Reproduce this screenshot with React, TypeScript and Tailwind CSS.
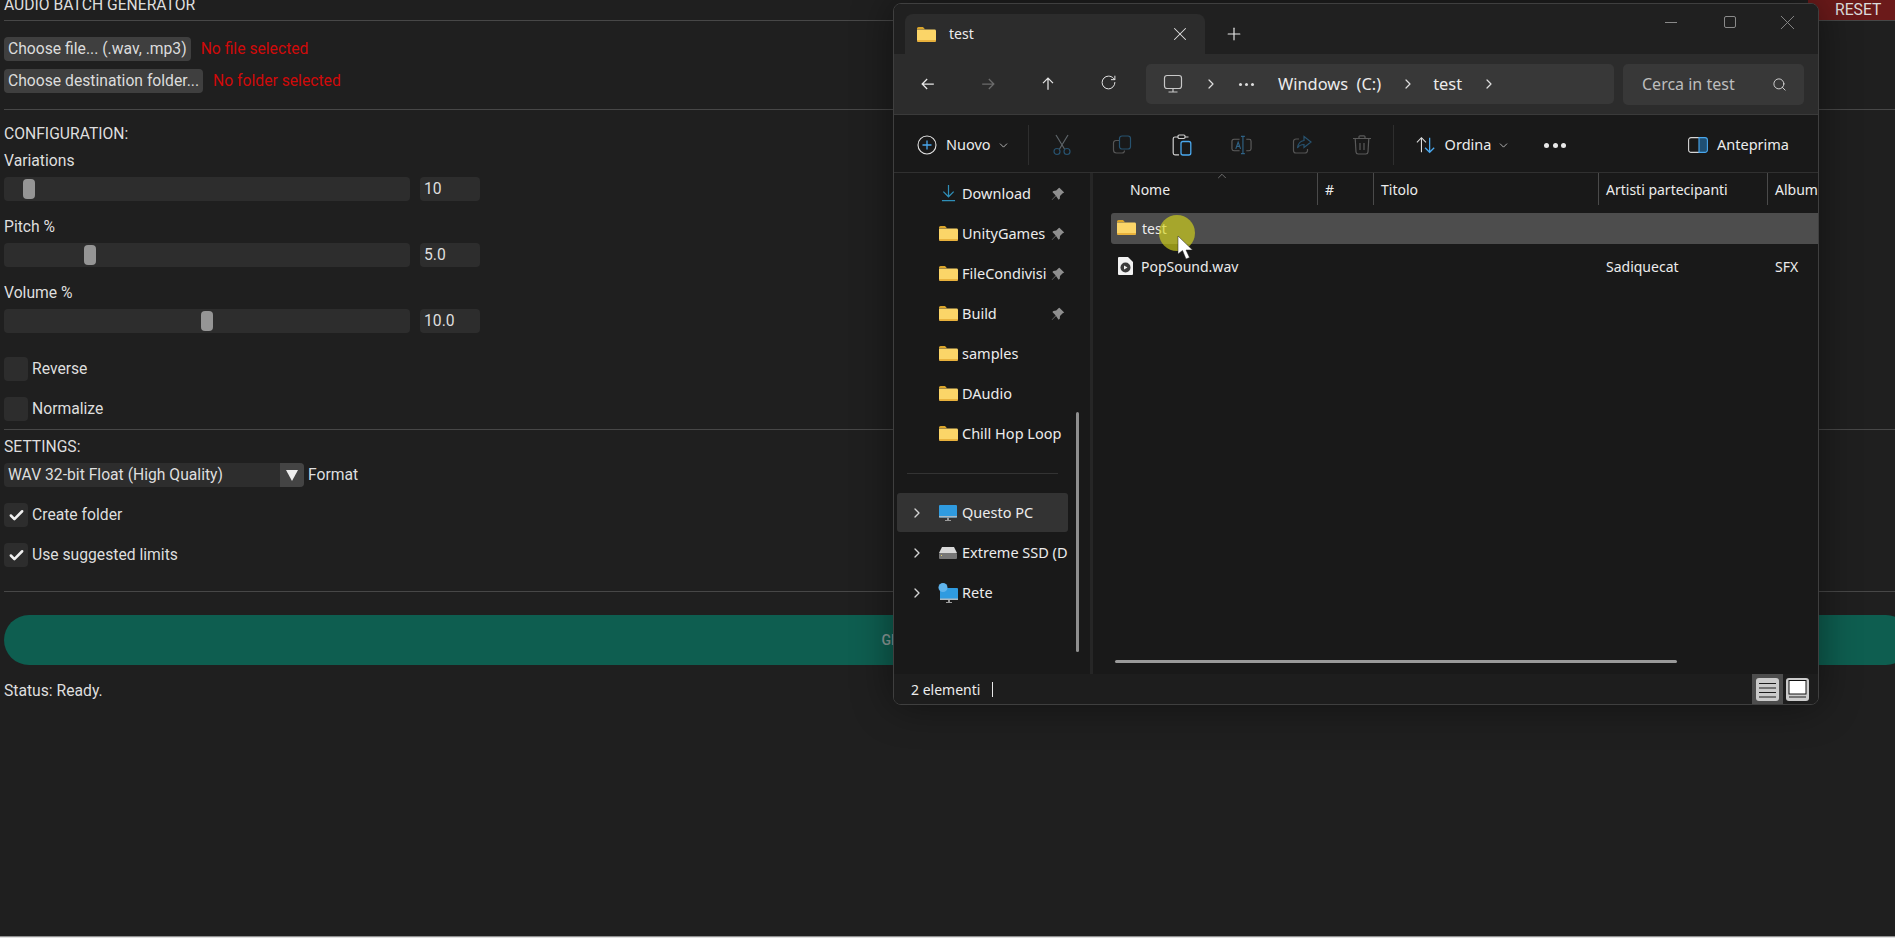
import React, { FC, ReactNode } from 'react';
import { ChevronDown, ChevronRight, ChevronUp, Check, Plus, RotateCw, Search, X } from 'lucide-react';

// ---- left app bits ----
const Hr: FC<{ className?: string }> = ({ className = '' }) => <div className={`h-px bg-[#474747] ${className}`} />;

const PickRow: FC<{ label: string; hint: string }> = ({ label, hint }) => (
  <div className="flex items-center h-6 mb-2">
    <div className="h-6 px-1 flex items-center rounded-[4px] bg-[#3f3f3f] text-[#dcdcdc]">{label}</div>
    <span className="ml-[10px] text-[#d00a0a]">{hint}</span>
  </div>
);

const SliderRow: FC<{ label: string; value: string; thumb: string }> = ({ label, value, thumb }) => (
  <div className="h-[66px]">
    <div className="h-[16px] leading-[16px]">{label}</div>
    <div className="flex mt-[8px]">
      <div className="w-[406px] h-6 rounded-[4px] bg-[#2d2d2d] flex items-center">
        <div className={`w-[12px] h-5 rounded-[4px] bg-[#959595] ${thumb}`} />
      </div>
      <div className="ml-[10px] w-[60px] h-6 rounded-[4px] bg-[#2d2d2d] px-1 flex items-center">{value}</div>
    </div>
  </div>
);

const CheckRow: FC<{ label: string; on?: boolean; className?: string }> = ({ label, on, className = '' }) => (
  <div className={`flex items-center h-6 ${className}`}>
    <div className="w-6 h-6 rounded-[4px] bg-[#2d2d2d] flex items-center justify-center">
      {on && <Check size={17} strokeWidth={3.6} color="#f0f0f0" />}
    </div>
    <span className="ml-[4px]">{label}</span>
  </div>
);

// ---- explorer icons ----
const Folder: FC<{ className?: string }> = ({ className = 'w-[19px] h-[15px]' }) => (
  <svg viewBox="0 0 19 15" className={className}>
    <path d="M0 1.5A1.5 1.5 0 0 1 1.5 0H6l2 2.2H0z" fill="#dba52a" />
    <path d="M0 2.6h17.6A1.4 1.4 0 0 1 19 4v9.6a1.4 1.4 0 0 1-1.4 1.4H1.4A1.4 1.4 0 0 1 0 13.6z" fill="#fbd568" />
    <path d="M0 13h19v.6a1.4 1.4 0 0 1-1.4 1.4H1.4A1.4 1.4 0 0 1 0 13.6z" fill="#e8b13c" />
  </svg>
);

const Pin: FC = () => (
  <svg viewBox="0 0 14 14" className="w-[14px] h-[14px]">
    <path d="M8.4.8l4.8 4.8-1.5.6-2.7 2.7-.2 2.8-1.2 1L5 8.9 1 13l-.3-.3 4-4.2L1.4 5l1-1.1 2.8-.3 2.6-2.6z" fill="#8f8f8f" />
  </svg>
);

const Sep: FC<{ className?: string }> = ({ className = '' }) => <div className={`w-px h-[40px] bg-[#2e2e2e] ${className}`} />;

const IconCell: FC<{ children: ReactNode }> = ({ children }) => (
  <div className="w-[60px] flex items-center justify-center">{children}</div>
);

const SideRow: FC<{ icon: ReactNode; label: string; pin?: boolean; expand?: boolean; active?: boolean }> = ({ icon, label, pin, expand, active }) => (
  <div className={`ml-[3px] w-[171px] h-[39px] mb-px flex items-center rounded-[3px] ${active ? 'bg-[#333333]' : ''}`}>
    <div className="w-[41px] pl-[12px] flex">
      {expand && <ChevronRight size={16} strokeWidth={2} color="#d4d4d4" />}
    </div>
    <div className="w-[20px] flex justify-center">{icon}</div>
    <div className={`ml-[4px] overflow-hidden whitespace-nowrap ${pin ? 'w-[85px]' : 'w-[106px]'}`}>{label}</div>
    {pin && <div className="ml-[4px]"><Pin /></div>}
  </div>
);

const Explorer: FC = () => (
  <div className="absolute left-[893px] top-[3px] w-[926px] h-[702px] flex flex-col overflow-hidden rounded-[8px] border border-[#3f3f3f] bg-[#191919] text-[#ececec] text-[14px] shadow-[0_0_40px_rgba(0,0,0,0.45)] font-[family-name:'Noto_Sans',sans-serif]">
    {/* tabs */}
    <div className="h-[50px] shrink-0 bg-[#202020] flex items-end pl-[11px]">
      <div className="w-[300px] h-[40px] rounded-t-[8px] bg-[#2c2c2c] flex items-center pl-[12px]">
        <Folder />
        <span className="ml-[13px] -mt-[1px]">test</span>
        <X size={22} strokeWidth={1.1} color="#e0e0e0" className="ml-[195px]" />
      </div>
      <div className="h-[40px] flex items-center ml-[19px]">
        <Plus size={20} strokeWidth={1.4} color="#e8e8e8" />
      </div>
      <div className="ml-auto self-start flex items-center h-[36px]">
        <div className="w-[12px] h-px bg-[#8a8a8a] mr-[47px]" />
        <div className="w-[12px] h-[12px] rounded-[2px] border border-[#8a8a8a] mr-[39px]" />
        <X size={25} strokeWidth={0.9} color="#8a8a8a" className="mr-[18px]" />
      </div>
    </div>
    {/* nav */}
    <div className="h-[61px] shrink-0 bg-[#2c2c2c] flex items-center border-b border-[#3a3a3a]">
      <div className="w-[252px] pl-[4px] flex">
        {[
          { d: 'M19 12H5M11 6l-6 6 6 6', c: '#e6e6e6' },
          { d: 'M5 12h14M13 6l6 6-6 6', c: '#6b6b6b' },
          { d: 'M12 19V5M6 11l6-6 6 6', c: '#e6e6e6' },
        ].map((n, i) => (
          <div key={i} className="w-[60px] flex justify-center">
            <svg viewBox="0 0 24 24" className="w-[20px] h-[20px]" fill="none" stroke={n.c} strokeWidth="1.5"><path d={n.d} /></svg>
          </div>
        ))}
        <div className="w-[60px] flex justify-center">
          <RotateCw size={17} strokeWidth={1.4} color="#e6e6e6" />
        </div>
      </div>
      <div className="w-[468px] h-[40px] rounded-[5px] bg-[#383838] flex items-center">
        <svg viewBox="0 0 20 20" className="w-[20px] h-[20px] ml-[17px]" fill="none" stroke="#c8c8c8" strokeWidth="1.2">
          <rect x="1.5" y="1.5" width="17" height="13" rx="2.5" />
          <path d="M10 14.5v3M5.5 18h9" />
        </svg>
        <ChevronRight size={16} strokeWidth={1.8} color="#dedede" className="ml-[20px]" />
        <span className="ml-[20px] flex gap-[3px]">
          <i className="w-[3px] h-[3px] rounded-full bg-[#dedede]" />
          <i className="w-[3px] h-[3px] rounded-full bg-[#dedede]" />
          <i className="w-[3px] h-[3px] rounded-full bg-[#dedede]" />
        </span>
        <span className="ml-[24px] text-[16.4px] whitespace-pre">Windows  (C:)</span>
        <ChevronRight size={16} strokeWidth={1.8} color="#dedede" className="ml-[19px]" />
        <span className="ml-[17px] text-[16.4px]">test</span>
        <ChevronRight size={16} strokeWidth={1.8} color="#dedede" className="ml-[19px]" />
      </div>
      <div className="ml-[9px] w-[181px] h-[41px] rounded-[5px] bg-[#383838] flex items-center pl-[19px]">
        <span className="text-[16px] text-[#bdbdbd] whitespace-nowrap">Cerca in test</span>
        <Search size={15} strokeWidth={1.5} color="#d8d8d8" className="ml-auto mr-[17px]" />
      </div>
    </div>
    {/* command bar */}
    <div className="h-[58px] shrink-0 flex items-center pt-[3px] border-b border-[#303030] bg-[#191919] text-[14.5px]">
      <svg viewBox="0 0 20 20" className="w-[20px] h-[20px] ml-[23px]" fill="none" strokeWidth="1.1">
        <circle cx="10" cy="10" r="9" stroke="#e0e0e0" />
        <path d="M10 5.5v9M5.5 10h9" stroke="#4aa8ee" strokeWidth="1.3" />
      </svg>
      <span className="ml-[9px]">Nuovo</span>
      <ChevronDown size={13} strokeWidth={1.5} color="#cfcfcf" className="ml-[6px]" />
      <Sep className="ml-[18px]" />
      <div className="flex ml-[3px]">
        <IconCell>
          <svg viewBox="0 0 20 22" className="w-[20px] h-[22px]" fill="none" strokeWidth="1.2">
            <path d="M4 1l8.5 14M16 1L7.5 15" stroke="#5d6468" />
            <circle cx="5" cy="17.5" r="3" stroke="#27526f" />
            <circle cx="15" cy="17.5" r="3" stroke="#27526f" />
          </svg>
        </IconCell>
        <IconCell>
          <svg viewBox="0 0 20 20" className="w-[20px] h-[20px]" fill="none" strokeWidth="1.2">
            <rect x="7.5" y="1" width="11" height="13" rx="2.5" stroke="#27526f" />
            <path d="M7 5.5H4A2.5 2.5 0 0 0 1.5 8v7A3 3 0 0 0 4.500 18H10a2.500 2.500 0 0 0 2.500-2.500" stroke="#555" />
          </svg>
        </IconCell>
        <IconCell>
          <svg viewBox="0 0 20 22" className="w-[20px] h-[22px]" fill="none" strokeWidth="1.2">
            <path d="M6 3H3a1.800 1.800 0 0 0-1.800 1.800V19A1.800 1.800 0 0 0 3 20.800h4M13 3h3.500" stroke="#cfcfcf" />
            <rect x="6" y="1" width="7" height="3.500" rx="1.200" stroke="#cfcfcf" />
            <rect x="9" y="7.500" width="9.800" height="13.500" rx="2" stroke="#4aa8ee" strokeWidth="1.300" />
          </svg>
        </IconCell>
        <IconCell>
          <svg viewBox="0 0 22 20" className="w-[21px] h-[20px]" fill="none" strokeWidth="1.2">
            <path d="M9 4H3a2 2 0 0 0-2 2v8a2 2 0 0 0 2 2h6M16 4h3a2 2 0 0 1 2 2v8a2 2 0 0 1-2 2h-3" stroke="#5f5f5f" />
            <path d="M12.500 1v18M10.500 1h4M10.500 19h4M5 14l2.500-7L10 14M6 11.500h3" stroke="#2f6285" />
          </svg>
        </IconCell>
        <IconCell>
          <svg viewBox="0 0 20 20" className="w-[20px] h-[20px]" fill="none" strokeWidth="1.2">
            <path d="M7 4H4a2.500 2.500 0 0 0-2.500 2.500v9A2.500 2.500 0 0 0 4 18h9a2.500 2.500 0 0 0 2.500-2.500V14" stroke="#555" />
            <path d="M12 1.500L19 7l-7 5.500V9.500c-3 0-5 1-6.500 3.500.5-4 3-7 6.500-7.500z" stroke="#27526f" />
          </svg>
        </IconCell>
        <IconCell>
          <svg viewBox="0 0 18 20" className="w-[18px] h-[20px]" fill="none" stroke="#5a5a5a" strokeWidth="1.2">
            <path d="M0 3.500h18M6 3.500V1.800A1 1 0 0 1 7 .8h4a1 1 0 0 1 1 1v1.700M2.200 3.500l.8 13.500A2.200 2.200 0 0 0 5.200 19h7.600a2.200 2.200 0 0 0 2.200-2l.8-13.500M7 8v7M11 8v7" />
          </svg>
        </IconCell>
      </div>
      <Sep className="ml-[1px]" />
      <svg viewBox="0 0 22 18" className="w-[20px] h-[18px] ml-[22px]" fill="none" strokeWidth="1.200">
        <path d="M6 17V1M1 6l5-5 5 5" stroke="#dcdcdc" />
        <path d="M15 1v16M10 12l5 5 5-5" stroke="#4aa8ee" strokeWidth="1.400" />
      </svg>
      <span className="ml-[9px]">Ordina</span>
      <ChevronDown size={13} strokeWidth={1.5} color="#cfcfcf" className="ml-[6px]" />
      <div className="flex gap-[3.500px] ml-[34px]">
        <i className="w-[5px] h-[5px] rounded-full bg-[#e8e8e8]" />
        <i className="w-[5px] h-[5px] rounded-full bg-[#e8e8e8]" />
        <i className="w-[5px] h-[5px] rounded-full bg-[#e8e8e8]" />
      </div>
      <svg viewBox="0 0 20 16" className="w-[20px] h-[16px] ml-auto" fill="none" strokeWidth="1.100">
        <path d="M11 .6H3A2.400 2.400 0 0 0 .6 3v10A2.400 2.400 0 0 0 3 15.400h8" stroke="#d6d6d6" />
        <path d="M11 .6h6A2.400 2.400 0 0 1 19.400 3v10a2.400 2.400 0 0 1-2.400 2.400h-6z" stroke="#4aa8ee" fill="#1f4f73" />
      </svg>
      <span className="ml-[9px] mr-[29px]">Anteprima</span>
    </div>
    {/* body */}
    <div className="flex-1 min-h-0 flex relative">
      <div className="w-[196px] shrink-0 overflow-hidden pt-px text-[14.5px]">
        <SideRow pin label="Download" icon={
          <svg viewBox="0 0 16 18" className="w-[15px] h-[17px]" fill="none" stroke="#2f8fb8" strokeWidth="1.300"><path d="M8 0v12M2.500 7L8 12.500 13.500 7M1 16.500h14" /></svg>
        } />
        <SideRow pin label="UnityGames" icon={<Folder />} />
        <SideRow pin label="FileCondivisione" icon={<Folder />} />
        <SideRow pin label="Build" icon={<Folder />} />
        <SideRow label="samples" icon={<Folder />} />
        <SideRow label="DAudio" icon={<Folder />} />
        <SideRow label="Chill Hop Loop" icon={<Folder />} />
        <div className="ml-[13px] w-[151px] h-px bg-[#333333] mt-[20px] mb-[19px]" />
        <SideRow expand active label="Questo PC" icon={
          <svg viewBox="0 0 18 16" className="w-[18px] h-[16px]">
            <rect x="0" y="0" width="18" height="12.500" rx="1" fill="#2f9be0" />
            <rect x="0" y="11" width="18" height="1.500" fill="#a9b9c4" />
            <path d="M6 15h6v1H6zM8 12.500h2V15H8z" fill="#9a9a9a" />
          </svg>
        } />
        <SideRow expand label="Extreme SSD (D:)" icon={
          <svg viewBox="0 0 18 12" className="w-[18px] h-[12px]">
            <path d="M3 0h12l3 6H0z" fill="#d8d8d8" />
            <rect y="6" width="18" height="6" rx="1" fill="#777" />
            <rect x="2" y="8" width="1" height="1" fill="#e4d26a" />
          </svg>
        } />
        <SideRow expand label="Rete" icon={
          <svg viewBox="0 0 20 20" className="w-[20px] h-[20px]">
            <rect x="2" y="5" width="18" height="12" rx="1" fill="#2f9be0" />
            <rect x="2" y="15.500" width="18" height="1.500" fill="#a9b9c4" />
            <path d="M8 19h6v1H8zM10 17h2v2h-2z" fill="#9a9a9a" />
            <circle cx="5" cy="4.500" r="4.500" fill="#5fb4ec" />
          </svg>
        } />
      </div>
      <div className="w-[3px] shrink-0 bg-[#262626]" />
      <div className="flex-1 min-w-0 overflow-hidden">
        <div className="h-[40px] grid grid-cols-[224px_56px_225px_169px_60px] whitespace-nowrap">
          <div className="h-[32px] pl-[37px] flex items-center">Nome</div>
          <div className="h-[32px] pl-[7px] border-l border-[#4a4a4a] flex items-center">#</div>
          <div className="h-[32px] pl-[7px] border-l border-[#4a4a4a] flex items-center">Titolo</div>
          <div className="h-[32px] pl-[7px] border-l border-[#4a4a4a] flex items-center">Artisti partecipanti</div>
          <div className="h-[32px] pl-[7px] border-l border-[#4a4a4a] flex items-center">Album</div>
        </div>
        <div className="ml-[18px] h-[31px] rounded-l-[3px] bg-[#4d4d4d] flex items-center pl-[6px]">
          <div className="-mt-[2px]"><Folder /></div>
          <span className="ml-[6px]">test</span>
        </div>
        <div className="mt-[6px] h-[32px] grid grid-cols-[224px_56px_225px_169px_60px] items-center whitespace-nowrap">
          <div className="pl-[25px] flex items-center">
            <svg viewBox="0 0 15 18" className="w-[15px] h-[18px]">
              <path d="M1 0h9l5 5v12a1 1 0 0 1-1 1H1a1 1 0 0 1-1-1V1a1 1 0 0 1 1-1z" fill="#f2f2f2" />
              <circle cx="7.500" cy="10.500" r="5" fill="#3a3a3a" />
              <path d="M6 8.500l3.500 2L6 12.500z" fill="#f2f2f2" />
            </svg>
            <span className="ml-[8px]">PopSound.wav</span>
          </div>
          <div />
          <div />
          <div className="pl-[8px]">Sadiquecat</div>
          <div className="pl-[8px]">SFX</div>
        </div>
      </div>
      {/* sort arrow + scrollbars sit over the panes */}
      <ChevronUp size={14} strokeWidth={1} color="#a8a8a8" className="absolute left-[321px] -top-[4px]" />
      <div className="absolute left-[182px] top-[239px] w-[3px] h-[240px] rounded-full bg-[#8f8f8f]" />
      <div className="absolute left-[221px] top-[487px] w-[562px] h-[3px] rounded-full bg-[#9a9a9a]" />
    </div>
    {/* status */}
    <div className="h-[30px] shrink-0 bg-[#1d1d1d] flex items-center pl-[17px] relative">
      <span className="text-[14px]">2 elementi</span>
      <div className="ml-[12px] w-px h-[15px] bg-[#e8e8e8]" />
      <div className="ml-auto mr-[9px] flex items-start h-full">
        <div className="w-[31px] h-[31px] bg-[#4d4d4d] flex items-center justify-center">
          <svg viewBox="0 0 23 23" className="w-[23px] h-[23px]">
            <rect width="23" height="23" rx="3" fill="#cbcbcb" />
            <path d="M3 5.500h17M3 10h17M3 14.500h17M3 19h17" stroke="#1c1c1c" strokeWidth="1" />
          </svg>
        </div>
        <div className="ml-[3px] w-[23px] h-[30px] flex items-center">
          <svg viewBox="0 0 23 23" className="w-[23px] h-[23px]">
            <rect width="23" height="23" rx="3" fill="#cbcbcb" />
            <rect x="3" y="2.500" width="17" height="13.500" fill="#fff" stroke="#111" strokeWidth="1" />
            <path d="M3 19h17" stroke="#1c1c1c" strokeWidth="1" />
          </svg>
        </div>
      </div>
    </div>
  </div>
);

// mouse highlight + arrow, recorded over the explorer
const Cursor: FC = () => (
  <>
    <div className="absolute left-[1159px] top-[215px] w-[36px] h-[36px] rounded-full bg-[#d6d61a]/65" />
    <svg viewBox="0 0 18 26" className="absolute left-[1177px] top-[235px] w-[18px] h-[26px]">
      <path d="M1 1v18l4.500-3.500L9 24l3.500-1.500L9 15h6.500z" fill="#ffffff" stroke="#222" strokeWidth="0.500" />
    </svg>
  </>
);

export default function App() {
  return (
    <div className="relative w-full h-[938px] overflow-hidden bg-[#1f1f1f] text-[#dedede] text-[15.7px] font-[family-name:Roboto,sans-serif]">
      <div className="h-[936px] pl-1">
        <div className="h-[21px] flex items-start justify-between border-b border-[#474747]">
          <span className="-mt-[5px] leading-[20px]">AUDIO BATCH GENERATOR</span>
          <div className="w-[87px] h-[20px] bg-[#6b1a1a] flex items-center pl-[27px] text-[#dcdcdc]">RESET</div>
        </div>
        <div className="pt-[16px]">
          <PickRow label="Choose file... (.wav, .mp3)" hint="No file selected" />
          <PickRow label="Choose destination folder..." hint="No folder selected" />
        </div>
        <Hr className="mt-[16px]" />
        <div className="h-[16px] leading-[16px] mt-[16px]">CONFIGURATION:</div>
        <div className="mt-[11px]">
          <SliderRow label="Variations" value="10" thumb="ml-[19px]" />
          <SliderRow label="Pitch %" value="5.0" thumb="ml-[80px]" />
          <SliderRow label="Volume %" value="10.0" thumb="ml-[197px]" />
        </div>
        <CheckRow label="Reverse" className="mt-[6px]" />
        <CheckRow label="Normalize" className="mt-[16px]" />
        <Hr className="mt-[8px]" />
        <div className="h-[16px] leading-[16px] mt-[9px]">SETTINGS:</div>
        <div className="flex items-center h-6 mt-[8px]">
          <div className="w-[300px] h-6 rounded-[4px] bg-[#2d2d2d] flex items-center pl-1 overflow-hidden">
            <span>WAV 32-bit Float (High Quality)</span>
            <div className="ml-auto w-6 h-6 bg-[#444444] flex items-center justify-center">
              <svg viewBox="0 0 12 11" className="w-[12px] h-[11px]"><path d="M0 0h12L6 11z" fill="#eeeeee" /></svg>
            </div>
          </div>
          <span className="ml-[4px]">Format</span>
        </div>
        <CheckRow on label="Create folder" className="mt-[16px]" />
        <CheckRow on label="Use suggested limits" className="mt-[16px]" />
        <Hr className="mt-[24px]" />
        <div className="mt-[23px] -mr-[16px] h-[50px] rounded-[25px] bg-[#0e5e50] flex items-center justify-center font-medium text-[14px] text-[#8b9a97]">
          GENERATE VARIATIONS
        </div>
        <div className="mt-[18px] h-[16px] leading-[16px]">Status: Ready.</div>
      </div>
      <div className="h-px bg-[#8f8f8f]" />
      <div className="h-px bg-[#e2e2e2]" />
      <Explorer />
      <Cursor />
    </div>
  );
}
